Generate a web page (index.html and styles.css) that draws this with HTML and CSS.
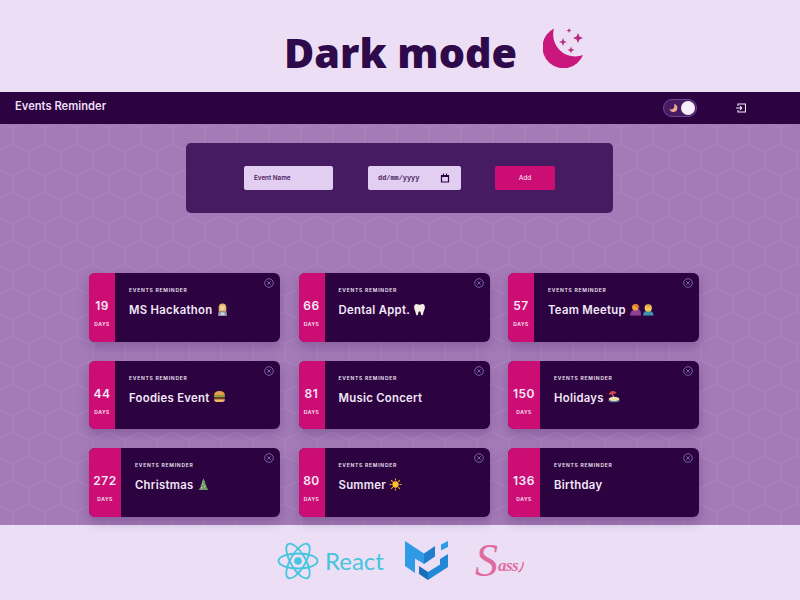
FILE: index.html
```html
<!DOCTYPE html>
<html lang="en">
<head>
    <meta charset="UTF-8">
    <meta name="viewport" content="width=device-width, initial-scale=1.0">
    <title>Events Reminder - Dark mode</title>
    <link rel="stylesheet" href="styles.css">
</head>
<body>

<svg class="defs" width="0" height="0" aria-hidden="true">
    <symbol id="close" viewBox="0 0 10 10">
        <circle cx="5" cy="5" r="4.3" fill="none" stroke="#7564a8" stroke-width="1"/>
        <path d="M3.3 3.3l3.4 3.4M6.700 3.300l-3.400 3.400" stroke="#7564a8" stroke-width="1"/>
    </symbol>
    <symbol id="coder" viewBox="0 0 12 12">
        <path d="M2.500 8V4a3.500 3.500 0 0 1 7 0v4z" fill="#e0b56c"/>
        <circle cx="6" cy="4.600" r="2.200" fill="#f3cfa0"/>
        <path d="M2 12V9.200Q2 7.600 4 7.600h4q2 0 2 1.600V12z" fill="#8d93a6"/>
        <rect x="4.200" y="8.800" width="3.600" height="2.200" fill="#d7dae3"/>
    </symbol>
    <symbol id="tooth" viewBox="0 0 12 12">
        <path d="M3.300 1Q6 2 8.700 1q2.300 .3 2.300 3 0 2-1 3.400L9 11q-1 .8-1.500-.5L6.800 8q-.8-1-1.600 0l-.7 2.500Q4 11.800 3 11L2 7.400Q1 6 1 4q0-2.700 2.300-3z" fill="#f4efe6"/>
    </symbol>
    <symbol id="meetup" viewBox="0 0 24 12">
        <path d="M1 12Q1 7 5 6.500L9 5q3 2 2.500 7z" fill="#8f3f96"/>
        <circle cx="6" cy="4" r="3" fill="#f0a63c"/>
        <path d="M4 1.500L8 5 10 3.500 8 .8z" fill="#e57a2f"/>
        <path d="M13.500 12q0-4 3-4.500h4q3 .5 3 4.500z" fill="#3f8fb0"/>
        <circle cx="18.500" cy="4.500" r="3.500" fill="#f5c55a"/>
        <path d="M16 3.500Q18.500 0 21.500 3.500 18.500 2.500 16 3.500z" fill="#d99a35"/>
    </symbol>
    <symbol id="burger" viewBox="0 0 12 12">
        <path d="M1 5.200Q1 1 6 1t5 4.200z" fill="#e5a04a"/>
        <rect x="1" y="5.400" width="10" height="1.300" rx=".6" fill="#7fb23c"/>
        <rect x="1" y="6.700" width="10" height="1.600" rx=".8" fill="#7a3f1d"/>
        <path d="M1 8.500h10q0 2.500-2.500 2.500h-5Q1 11 1 8.500z" fill="#efb765"/>
    </symbol>
    <symbol id="beach" viewBox="0 0 12 12">
        <path d="M1.500 4.500Q2.500 .8 6 1q2 .2 3 2z" fill="#d8474a"/>
        <path d="M5 4l1.500 4" stroke="#e9dcc8" stroke-width=".8"/>
        <ellipse cx="6.500" cy="8.300" rx="5" ry="2" fill="#f0dfae"/>
        <path d="M1.500 9.300q5 2.800 10 0v.8q-5 2.500-10 0z" fill="#6fc3d8"/>
    </symbol>
    <symbol id="tree" viewBox="0 0 12 12">
        <path d="M6 .5L8 4.300 7.200 4.300 9 7.600 8.200 7.600 10.500 11H1.500L3.800 7.600 3 7.600 4.800 4.300 4 4.300z" fill="#6f9a63"/>
        <circle cx="5.300" cy="5.500" r=".6" fill="#e5d9c0"/>
        <circle cx="7" cy="8" r=".6" fill="#e5d9c0"/>
        <circle cx="4.300" cy="9" r=".6" fill="#e5d9c0"/>
    </symbol>
    <symbol id="sun" viewBox="0 0 12 12">
        <circle cx="6" cy="6" r="2.900" fill="#fbc02d"/>
        <path d="M6 .4v2M6 9.600v2M.4 6h2M9.600 6h2M2 2l1.500 1.500M8.500 8.500L10 10M2 10l1.500-1.500M8.500 3.500L10 2" stroke="#f7a823" stroke-width="1"/>
    </symbol>
</svg>

<header class="banner">
    <h1>Dark mode</h1>
    <svg class="moon" viewBox="0 0 40 40" width="40" height="40">
        <path d="M11 .5A21 21 0 1 0 40 27A22 22 0 0 1 11 .5z" fill="#c9177e"/>
        <path d="M35 5l1.500 3.500 3.500 1.500-3.500 1.500L35 15l-1.500-3.500L30 10l3.500-1.500z" fill="#b92c80"/>
        <path d="M20 10l1.100 2.900 2.900 1.100-2.900 1.100L20 18l-1.100-2.900L16 14l2.900-1.100z" fill="#b92c80"/>
        <path d="M28 18.500l.9 2.600 2.600.9-2.600.9-.9 2.600-.9-2.600-2.600-.9 2.600-.9z" fill="#b92c80"/>
        <path d="M26 0l.7 1.800 1.800.7-1.800.7-.7 1.800-.7-1.800-1.800-.7 1.800-.7z" fill="#b92c80"/>
    </svg>
</header>

<nav class="navbar">
    <span class="brand">Events Reminder</span>
    <div class="toggle">
        <svg viewBox="0 0 10 10" width="10" height="10">
            <path d="M6 1A4 4 0 1 1 1.500 6 3.500 3.500 0 0 0 6 1z" fill="#efa98f"/>
        </svg>
        <span class="knob"></span>
    </div>
    <svg class="logout" viewBox="0 0 10 10" width="10" height="10">
        <path d="M2 3V1h7.500v8H2V7" fill="none" stroke="#f3e8f8" stroke-width="1.100"/>
        <path d="M0 5h5.500M4 3.200L5.800 5 4 6.800" fill="none" stroke="#f3e8f8" stroke-width="1.100"/>
    </svg>
</nav>

<main class="content">
    <form class="add-form">
        <input class="field field-name" type="text" placeholder="Event Name">
        <div class="field field-date">
            <span>dd/mm/yyyy</span>
            <svg viewBox="0 0 10 10" width="10" height="10">
                <path d="M1.500 2.500h7v6.500h-7z" fill="none" stroke="#2c0340" stroke-width="1.200"/>
                <path d="M1.500 2h7v2h-7zM3 .5h1V2H3zM6 .5h1V2H6z" fill="#2c0340"/>
            </svg>
        </div>
        <button class="add-btn" type="button">Add</button>
    </form>

    <section class="cards">
        <article class="card">
            <div class="days"><b>19</b><small>DAYS</small></div>
            <div class="info"><small>EVENTS REMINDER</small><h2>MS Hackathon <svg class="emoji" viewBox="0 0 12 12"><use href="#coder"/></svg></h2></div>
            <svg class="close" viewBox="0 0 10 10"><use href="#close"/></svg>
        </article>
        <article class="card">
            <div class="days"><b>66</b><small>DAYS</small></div>
            <div class="info"><small>EVENTS REMINDER</small><h2>Dental Appt. <svg class="emoji" viewBox="0 0 12 12"><use href="#tooth"/></svg></h2></div>
            <svg class="close" viewBox="0 0 10 10"><use href="#close"/></svg>
        </article>
        <article class="card">
            <div class="days"><b>57</b><small>DAYS</small></div>
            <div class="info"><small>EVENTS REMINDER</small><h2>Team Meetup <svg class="emoji emoji-wide" viewBox="0 0 24 12"><use href="#meetup"/></svg></h2></div>
            <svg class="close" viewBox="0 0 10 10"><use href="#close"/></svg>
        </article>
        <article class="card">
            <div class="days"><b>44</b><small>DAYS</small></div>
            <div class="info"><small>EVENTS REMINDER</small><h2>Foodies Event <svg class="emoji" viewBox="0 0 12 12"><use href="#burger"/></svg></h2></div>
            <svg class="close" viewBox="0 0 10 10"><use href="#close"/></svg>
        </article>
        <article class="card">
            <div class="days"><b>81</b><small>DAYS</small></div>
            <div class="info"><small>EVENTS REMINDER</small><h2>Music Concert</h2></div>
            <svg class="close" viewBox="0 0 10 10"><use href="#close"/></svg>
        </article>
        <article class="card">
            <div class="days days-wide"><b>150</b><small>DAYS</small></div>
            <div class="info"><small>EVENTS REMINDER</small><h2>Holidays <svg class="emoji" viewBox="0 0 12 12"><use href="#beach"/></svg></h2></div>
            <svg class="close" viewBox="0 0 10 10"><use href="#close"/></svg>
        </article>
        <article class="card">
            <div class="days days-wide"><b>272</b><small>DAYS</small></div>
            <div class="info"><small>EVENTS REMINDER</small><h2>Christmas <svg class="emoji" viewBox="0 0 12 12"><use href="#tree"/></svg></h2></div>
            <svg class="close" viewBox="0 0 10 10"><use href="#close"/></svg>
        </article>
        <article class="card">
            <div class="days"><b>80</b><small>DAYS</small></div>
            <div class="info"><small>EVENTS REMINDER</small><h2>Summer <svg class="emoji" viewBox="0 0 12 12"><use href="#sun"/></svg></h2></div>
            <svg class="close" viewBox="0 0 10 10"><use href="#close"/></svg>
        </article>
        <article class="card">
            <div class="days days-wide"><b>136</b><small>DAYS</small></div>
            <div class="info"><small>EVENTS REMINDER</small><h2>Birthday</h2></div>
            <svg class="close" viewBox="0 0 10 10"><use href="#close"/></svg>
        </article>
    </section>
</main>

<footer class="stack">
    <div class="react">
        <svg viewBox="-21 -20 42 40" width="42" height="40">
            <g fill="none" stroke="#45c5de" stroke-width="1.800">
                <ellipse rx="19.500" ry="7.500"/>
                <ellipse rx="19.500" ry="7.500" transform="rotate(60)"/>
                <ellipse rx="19.500" ry="7.500" transform="rotate(120)"/>
            </g>
            <circle r="3.800" fill="#45c5de"/>
        </svg>
        <span>React</span>
    </div>
    <svg class="mui" viewBox="0 0 44 40" width="44" height="40">
        <path d="M0 0L19 12.500V23L10 17.500V32L0 25z" fill="#2f9be6"/>
        <path d="M19 12.500L30 5V15.500L19 23z" fill="#1f7fcc"/>
        <path d="M36 3.500L43 0V6L36 9.500z" fill="#2f9be6"/>
        <path d="M43 13V26L23 39V31L35 23.500V18z" fill="#2488d8"/>
        <path d="M14 25V33L23 39V31z" fill="#1a6fb8"/>
    </svg>
    <div class="sass">
        <span class="sass-cap">S</span><span class="sass-rest">ass</span>
        <svg viewBox="0 0 6 12" width="6" height="12">
            <path d="M0 11Q4 10 5.500 1" fill="none" stroke="#e06b9f" stroke-width="1.500"/>
        </svg>
    </div>
</footer>

</body>
</html>
```

FILE: styles.css
```css
* {
    box-sizing: border-box;
}
body {
    font-family: Inter, "Liberation Sans", sans-serif;
    background-color: #ecdff5;
    display: flex;
    flex-direction: column;
    width: 800px;
    height: 600px;
    margin: 0;
    overflow: hidden;
}
.defs {
    position: absolute;
}

/* top title */
.banner {
    height: 92px;
    padding-left: 284px;
    padding-top: 27px;
    display: flex;
    align-items: flex-start;
    gap: 26px;
}
.banner h1 {
    margin: 0;
    font-family: "Open Sans", sans-serif;
    font-size: 41.300px;
    line-height: 50px;
    font-weight: 800;
    color: #2f0a4a;
}
.moon {
    margin-top: 1px;
}

/* navbar */
.navbar {
    height: 32px;
    flex-shrink: 0;
    background-color: #2c0340;
    display: flex;
    align-items: center;
    padding: 0 54px 0 15px;
}
.brand {
    font-size: 11.200px;
    font-weight: 600;
    color: #ecdff5;
    margin-right: auto;
    margin-top: -4px;
}
.toggle {
    width: 34px;
    height: 18px;
    border: 1px solid #6f4396;
    border-radius: 9px;
    background-color: #471b62;
    display: flex;
    align-items: center;
    justify-content: space-between;
    padding: 0 1px 0 4px;
    margin-right: 39px;
}
.knob {
    width: 14px;
    height: 14px;
    border-radius: 50%;
    background-color: #f6eefb;
}

/* main area */
.content {
    flex: 1;
    padding-top: 19px;
    background-color: #a47bb7;
    background-image: url("data:image/svg+xml,%3Csvg xmlns='http://www.w3.org/2000/svg' width='32' height='48'%3E%3Cpath d='M0 0V16L16 24L32 16V0M16 24V40L0 48M16 40L32 48' fill='none' stroke='%23ab85bd' stroke-width='1'/%3E%3C/svg%3E");
    background-position: 13px 4px;
}
.add-form {
    width: 427px;
    height: 70px;
    margin-left: 186px;
    padding-left: 58px;
    background-color: #471b62;
    border-radius: 5px;
    display: flex;
    align-items: center;
}
.field {
    height: 24px;
    border: none;
    border-radius: 2px;
    background-color: #e2cef0;
    font-size: 6.300px;
    color: #471b62;
}
.field-name {
    width: 89px;
    padding: 0 10px;
    font-family: Inter, "Liberation Sans", sans-serif;
    font-weight: 600;
    margin-right: 35px;
}
.field-name::placeholder {
    color: #471b62;
    opacity: 1;
}
.field-date {
    width: 93px;
    padding: 0 11px 0 10px;
    margin-right: 34px;
    display: flex;
    align-items: center;
    justify-content: space-between;
    font-family: "Liberation Mono", monospace;
    font-weight: 700;
    font-size: 6.900px;
}
.add-btn {
    width: 60px;
    height: 24px;
    border: none;
    border-radius: 2px;
    background-color: #cc0e74;
    color: #f6dff0;
    font-family: Inter, "Liberation Sans", sans-serif;
    font-size: 6.500px;
    font-weight: 500;
    padding: 0;
}

/* event cards */
.cards {
    width: 610px;
    margin: 60px 0 0 89px;
    display: grid;
    grid-template-columns: repeat(3, 191px);
    grid-auto-rows: 68.500px;
    column-gap: 18.500px;
    row-gap: 19px;
}
.card {
    position: relative;
    display: flex;
    background-color: #2c0340;
    border-radius: 6px;
    overflow: hidden;
    box-shadow: 0 5px 12px rgba(60, 20, 90, 0.28);
    color: #f3e8f8;
}
.days {
    width: 26px;
    flex-shrink: 0;
    background-color: #cc0e74;
    display: flex;
    flex-direction: column;
    align-items: center;
    padding-top: 25px;
}
.days-wide {
    width: 32px;
}
.days b {
    font-size: 12px;
    line-height: 16px;
    font-weight: 600;
    letter-spacing: 0.5px;
}
.days small {
    margin-top: 6px;
    font-size: 5px;
    line-height: 8px;
    font-weight: 600;
    letter-spacing: 0.5px;
}
.info {
    padding: 13px 0 0 14px;
}
.info small {
    display: block;
    font-size: 5px;
    line-height: 8px;
    font-weight: 600;
    letter-spacing: 0.75px;
}
.info h2 {
    margin: 8px 0 0;
    display: flex;
    align-items: center;
    font-size: 11.300px;
    line-height: 16px;
    font-weight: 600;
    letter-spacing: 0.3px;
    white-space: pre;
}
.emoji {
    width: 13px;
    height: 13px;
    margin-top: -2px;
}
.emoji-wide {
    width: 25px;
}
.close {
    position: absolute;
    top: 5px;
    right: 6px;
    width: 10px;
    height: 10px;
}

/* logos at the bottom */
.stack {
    height: 75px;
    flex-shrink: 0;
    display: flex;
    align-items: flex-start;
    padding: 16px 0 0 277px;
}
.react {
    display: flex;
    align-items: center;
    gap: 6px;
    margin-right: 21px;
    color: #45c5de;
    font-family: Lato, sans-serif;
    font-weight: 400;
    font-size: 24px;
    line-height: 40px;
}
.sass {
    display: flex;
    align-items: flex-end;
    height: 40px;
    margin-left: 26px;
    color: #e06b9f;
    font-family: "Liberation Serif", serif;
    font-style: italic;
}
.sass-cap {
    font-size: 46px;
    line-height: 40px;
}
.sass-rest {
    font-size: 17px;
    line-height: 18px;
    font-weight: 700;
    letter-spacing: -0.500px;
    margin-bottom: 6px;
}
.sass svg {
    margin-bottom: 8px;
}
```
